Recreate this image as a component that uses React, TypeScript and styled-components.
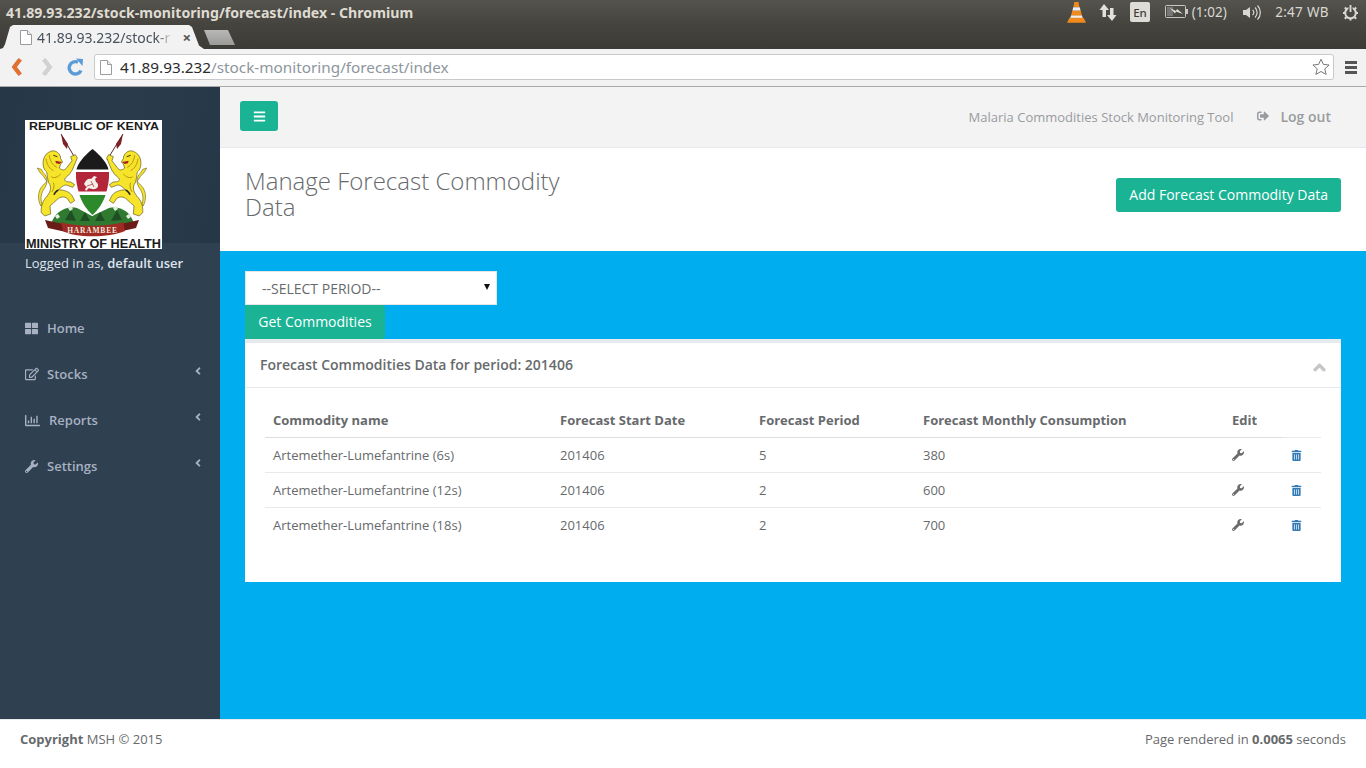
import { createGlobalStyle } from "styled-components";
import styled from "styled-components";
import {
  FaAngleLeft,
  FaBars,
  FaChevronUp,
  FaRegChartBar,
  FaRegEdit,
  FaSignOutAlt,
  FaThLarge,
  FaTrashAlt,
  FaWrench,
} from "react-icons/fa";

const GlobalStyle = createGlobalStyle`
  html, body {
    margin: 0;
    padding: 0;
    height: 100%;
    overflow: hidden;
  }
  body {
    font-family: "Open Sans", "Liberation Sans", sans-serif;
    font-size: 13px;
    color: #676a6c;
  }
  * {
    box-sizing: border-box;
  }
`;

const Screen = styled.div`
  width: 1366px;
  height: 768px;
  display: flex;
  flex-direction: column;
  overflow: hidden;
`;

/* ---- desktop + browser chrome ---- */

const TitleBar = styled.div`
  height: 24px;
  flex-shrink: 0;
  display: flex;
  align-items: center;
  justify-content: space-between;
  padding: 0 0 0 6px;
  background: linear-gradient(#55534d, #45443f);
`;

const WindowTitle = styled.div`
  font-family: "Noto Sans", "Open Sans", sans-serif;
  font-size: 14.15px;
  font-weight: 700;
  color: #dfdbd2;
  white-space: nowrap;
`;

const Tray = styled.div`
  display: flex;
  align-items: center;
  height: 24px;
  color: #d8d8d2;
  font-family: "Noto Sans", "Open Sans", sans-serif;
  font-size: 13.5px;
`;

const TrayItem = styled.div<{ $width: number; $inset?: number }>`
  width: ${(p) => p.$width}px;
  padding-left: ${(p) => p.$inset ?? 0}px;
  display: flex;
  align-items: center;
  justify-content: center;
  white-space: nowrap;
`;

const Clock = styled.span`
  letter-spacing: 0.3px;
`;

const LangBadge = styled.div`
  width: 20px;
  height: 20px;
  border-radius: 2px;
  background: #dedcd6;
  color: #3c3b37;
  font-size: 11.5px;
  font-weight: 500;
  display: flex;
  align-items: center;
  justify-content: center;
`;

const TabStrip = styled.div`
  height: 25px;
  flex-shrink: 0;
  display: flex;
  align-items: flex-end;
  background: linear-gradient(#45443f, #3c3b37);
`;

const ActiveTab = styled.div`
  width: 204px;
  height: 24px;
  flex-shrink: 0;
  display: flex;
  align-items: center;
  padding: 0 13px 0 20px;
  background: #f2f2f2;
  clip-path: polygon(0 100%, 3px 96%, 5px 80%, 10px 8%, 13px 0, 189px 0, 192px 8%, 199px 85%, 204px 100%);
`;

const TabTitle = styled.div`
  width: 136px;
  margin-left: 5px;
  overflow: hidden;
  white-space: nowrap;
  font-family: "Noto Sans", "Open Sans", sans-serif;
  font-size: 14px;
  color: #47505a;
  -webkit-mask-image: linear-gradient(90deg, #000 88%, transparent);
  mask-image: linear-gradient(90deg, #000 88%, transparent);
`;

const TabClose = styled.div`
  margin-left: auto;
  font-size: 15px;
  line-height: 1;
  font-weight: 700;
  color: #555;
`;

const NewTab = styled.div`
  width: 31px;
  height: 15px;
  margin: 0 0 4px 0;
  background: linear-gradient(#b8b8b6, #9a9a98);
  clip-path: polygon(0 0, 24px 0, 31px 100%, 6px 100%);
`;

const Toolbar = styled.div`
  height: 38px;
  flex-shrink: 0;
  display: flex;
  align-items: center;
  padding: 0 0 1px 0;
  background: #f2f2f2;
  border-bottom: 1px solid #a9a9a9;
`;

const NavIcons = styled.div`
  width: 94px;
  flex-shrink: 0;
  display: flex;
  align-items: center;
`;

const NavSlot = styled.div<{ $width: number }>`
  width: ${(p) => p.$width}px;
  display: flex;
  justify-content: center;
`;

const Omnibox = styled.div`
  width: 1240px;
  height: 26px;
  flex-shrink: 0;
  display: flex;
  align-items: center;
  padding: 0 3px 0 5px;
  background: #fff;
  border: 1px solid #c9c9c9;
  border-radius: 3px;
  font-family: "Noto Sans", "Open Sans", sans-serif;
  font-size: 15.3px;
`;

const UrlHost = styled.span`
  margin-left: 8px;
  color: #2b2b2b;
`;

const UrlPath = styled.span`
  color: #8d969d;
`;

const StarSlot = styled.div`
  margin-left: auto;
  display: flex;
`;

const MenuSlot = styled.div`
  flex: 1;
  display: flex;
  justify-content: center;
  padding-left: 1px;
`;

/* ---- the web page ---- */

const PageBody = styled.div`
  height: 632px;
  flex-shrink: 0;
  display: flex;
`;

const Sidebar = styled.aside`
  width: 220px;
  flex-shrink: 0;
  background: #2f4050;
`;

const Profile = styled.div`
  height: 156px;
  padding: 33px 0 0 25px;
  background: linear-gradient(100deg, #263747 0%, #2a3c4c 55%, #263747 100%);
`;

const LoggedIn = styled.div`
  margin: 12px 0 30px 25px;
  height: 20px;
  line-height: 16px;
  color: #dfe4ed;
  white-space: nowrap;

  strong {
    font-weight: 600;
  }
`;

const NavItem = styled.div`
  height: 46px;
  display: flex;
  align-items: center;
  padding: 0 16px 0 25px;
  color: #a7b1c2;
  font-weight: 600;
  font-size: 13px;

  svg {
    flex-shrink: 0;
  }
`;

const NavLabel = styled.span<{ $gap: number }>`
  margin-left: ${(p) => p.$gap}px;
`;

const NavArrow = styled.span`
  margin-left: auto;
  display: flex;
  margin-top: -6px;
`;

const Main = styled.main`
  flex: 1;
  min-width: 0;
  display: flex;
  flex-direction: column;
`;

const TopNav = styled.div`
  height: 61px;
  flex-shrink: 0;
  display: flex;
  align-items: center;
  padding: 0 35px 0 20px;
  background: #f3f3f4;
  border-bottom: 1px solid #e7eaec;
`;

const MenuButton = styled.button`
  width: 38px;
  height: 30px;
  margin-top: -2px;
  display: flex;
  align-items: center;
  justify-content: center;
  padding: 0;
  border: none;
  border-radius: 3px;
  background: #1ab394;
  color: #fff;
`;

const TopNavText = styled.span`
  margin-left: auto;
  color: #999c9e;
  white-space: nowrap;
`;

const LogOut = styled.a`
  margin: 0 0 2px 24px;
  display: flex;
  align-items: center;
  gap: 11px;
  color: #999c9e;
  font-size: 14px;
  font-weight: 600;
`;

const PageHeader = styled.div`
  height: 103px;
  flex-shrink: 0;
  display: flex;
  justify-content: space-between;
  padding: 20px 25px 0 25px;
  background: #fff;
`;

const PageTitle = styled.h2`
  width: 340px;
  margin: 0;
  font-size: 24px;
  font-weight: 300;
  line-height: 26px;
  color: #676a6c;
`;

const PrimaryButton = styled.button<{ $square?: boolean }>`
  height: 34px;
  padding: 0 13px 2px 13px;
  border: none;
  border-radius: ${(p) => (p.$square ? "0 3px 3px 0" : "3px")};
  background: #1ab394;
  color: #fff;
  font-family: inherit;
  font-size: 14px;
  white-space: nowrap;
`;

const AddButton = styled(PrimaryButton)`
  margin-top: 10px;
`;

const Content = styled.div`
  flex: 1;
  padding: 20px 25px 0 25px;
  background: #00adef;
`;

const PeriodSelect = styled.div`
  width: 252px;
  height: 34px;
  display: flex;
  align-items: center;
  justify-content: space-between;
  padding: 0 6px 0 16px;
  background: #fff;
  border: 1px solid #e5e6e7;
  font-size: 14px;
  color: #676a6c;
`;

const SelectArrow = styled.span`
  width: 0;
  height: 0;
  margin-top: -3px;
  border-left: 3.5px solid transparent;
  border-right: 3.5px solid transparent;
  border-top: 6px solid #111;
`;

const GetButton = styled(PrimaryButton)`
  display: block;
  width: 140px;
`;

const Panel = styled.section`
  height: 243px;
  background: #fff;
  border-top: 4px solid #e7eaec;
`;

const PanelTitle = styled.div`
  height: 45px;
  display: flex;
  align-items: center;
  justify-content: space-between;
  padding: 0 15px 2px 15px;
  border-bottom: 1px solid #e7eaec;
  font-size: 14px;
  font-weight: 600;
  color: #676a6c;
`;

const Collapse = styled.span`
  display: flex;
  color: #c4c6c8;
  margin-top: 6px;
`;

const PanelBody = styled.div`
  padding: 15px 20px 0 20px;
`;

const Table = styled.table`
  width: 1056px;
  table-layout: fixed;
  border-collapse: collapse;
  font-size: 13px;
  color: #676a6c;
`;

const HeadCell = styled.th<{ $blank?: boolean; $width: number }>`
  width: ${(p) => p.$width}px;
  height: 34px;
  padding: 0 8px;
  text-align: left;
  font-weight: 700;
  color: #676a6c;
  border-bottom: 1px solid ${(p) => (p.$blank ? "#e7eaec" : "#dddddd")};
`;

const Cell = styled.td`
  height: 35px;
  padding: 0 8px;
  border-bottom: 1px solid #e7eaec;
  white-space: nowrap;

  svg {
    display: block;
    margin-top: 1px;
  }
`;

const TrashCell = styled(Cell)`
  padding-left: 9px;
`;

const LastRow = styled.tr`
  td {
    border-bottom: none;
  }
`;

const Footer = styled.footer`
  height: 49px;
  flex-shrink: 0;
  display: flex;
  align-items: flex-start;
  justify-content: space-between;
  padding: 10px 20px 0 20px;
  background: #fff;
  border-top: 1px solid #e7eaec;
  color: #676a6c;
`;

const DocIcon = () => (
  <svg width="12" height="15" viewBox="0 0 12 15">
    <path d="M.5.5h7l4 4v10H.5z" fill="#fff" stroke="#9b9b9b" />
    <path d="M7.5.5v4h4" fill="#eee" stroke="#9b9b9b" />
  </svg>
);

const BackIcon = () => (
  <svg width="11" height="18" viewBox="0 0 11 18">
    <path d="M7.500.5 1 9l6.500 8.500 3-2L5.500 9l5-6.500z" fill="#e4702f" stroke="#cf5a20" strokeWidth=".6" />
  </svg>
);

const ForwardIcon = () => (
  <svg width="11" height="18" viewBox="0 0 11 18">
    <path d="M3.500.5 10 9l-6.500 8.500-3-2 5-6.500-5-6.500z" fill="#d2d2d2" stroke="#c6c6c6" strokeWidth=".6" />
  </svg>
);

const ReloadIcon = () => (
  <svg width="17" height="18" viewBox="0 0 17 18">
    <path d="M14 12.5A6.2 6.2 0 1 1 11 4.2" fill="none" stroke="#5b9bd8" strokeWidth="3.4" />
    <path d="M9 0.5 16 1l-.5 7z" fill="#5b9bd8" />
  </svg>
);

const StarIcon = () => (
  <svg width="18" height="18" viewBox="0 0 18 18">
    <path
      d="M9 1.2l2.4 5.2 5.7.6-4.3 3.8 1.3 5.6L9 13.5l-5.1 2.9 1.3-5.6L.9 7l5.7-.6z"
      fill="#fff"
      stroke="#777"
    />
  </svg>
);

const HamburgerIcon = () => (
  <svg width="14" height="13" viewBox="0 0 14 13">
    <path d="M1 0h12v3H1zM1 5h12v3H1zM1 10h12v3H1z" fill="#555" />
  </svg>
);

const ConeIcon = () => (
  <svg width="19" height="21" viewBox="0 0 19 21">
    <path d="M7.4 0h4l1 5H6.4z" fill="#f08a1c" />
    <path d="M6.2 5.2h6.6l.8 3.6H5.4z" fill="#eee" />
    <path d="M5.2 8.8h8.6l1.2 5H4z" fill="#f08a1c" />
    <path d="M4 13.6h11l.8 2.6H3.2z" fill="#eee" />
    <path d="M2.5 15.8h14l2.5 5H0z" fill="#f08a1c" />
  </svg>
);

const TransferIcon = () => (
  <svg width="18" height="17" viewBox="0 0 18 17">
    <path d="M5 0l5 6H7v7H3.500V6H.5z" fill="#e2e2dc" />
    <path d="M13 17l-5-6h3V4h3.500v7h3z" fill="#e2e2dc" />
  </svg>
);

const BatteryIcon = () => (
  <svg width="23" height="14" viewBox="0 0 23 14">
    <rect x=".5" y=".5" width="20" height="12" rx="1" fill="none" stroke="#c8c8c2" />
    <rect x="2" y="2" width="6" height="9" fill="#777" />
    <rect x="21" y="4" width="2" height="5" fill="#c8c8c2" />
    <path d="M5 3l6 3 1-2 6 5-7-2.500-1 2z" fill="#e2e2dc" />
  </svg>
);

const VolumeIcon = () => (
  <svg width="21" height="17" viewBox="0 0 21 17">
    <path d="M1 6h3l4-3v11l-4-3H1z" fill="#d8d8d2" />
    <path d="M10.500 6a3 3 0 0 1 0 5M13 3.500a7 7 0 0 1 0 10M15.500 1.500a10 10 0 0 1 0 14" fill="none" stroke="#d8d8d2" strokeWidth="1.200" />
  </svg>
);

// power symbol inside a cog, as the Ubuntu session indicator has it
const PowerIcon = () => (
  <svg width="17" height="17" viewBox="0 0 17 17">
    <circle cx="8.500" cy="9" r="5.300" fill="none" stroke="#d8d8d2" strokeWidth="2" />
    <path d="M8.500 1v7" stroke="#3f3e39" strokeWidth="4" />
    <path d="M8.500 1v7" stroke="#d8d8d2" strokeWidth="2" />
    <path d="M1 9h2.500M13.500 9H16M2.800 3.500l2 2M14.200 3.500l-2 2M2.800 14.700l2-2M14.200 14.700l-2-2M8.500 14v2.500" stroke="#d8d8d2" strokeWidth="2" />
  </svg>
);

// coordinates are those of a 3x crop of the crest, hence the scale
const Lion = () => (
  <g transform="translate(5 20) scale(.3333)">
    <path
      d="M50 124C44 114 38 104 30 98L22 84 34 88 40 98C54 112 54 128 44 144 34 158 30 172 36 194L32 198C22 176 24 156 34 142 40 134 46 130 50 124Z"
      fill="#f5e32c"
      stroke="#4d4310"
      strokeWidth="1.500"
    />
    <path
      d="M62 34C78 28 92 42 92 56L98 66 92 72 88 84C94 90 102 92 108 86L126 62 122 50 136 44 142 54 132 78C126 96 114 108 106 114 100 122 108 126 122 126L134 134 128 142 112 136C100 132 92 146 84 150 100 148 122 156 128 170L134 182 122 190 112 176C104 168 90 170 82 178 76 186 66 190 60 198L62 222 44 228 34 218C32 200 38 182 50 170 62 156 66 140 56 128 52 116 52 104 50 96 40 88 36 70 42 54 46 44 52 38 62 34Z"
      fill="#f6e42a"
      stroke="#4d4310"
      strokeWidth="1.800"
    />
    <path d="M48 56C50 70 56 84 70 92M58 46C60 62 66 74 80 82M64 110C74 116 82 112 92 102M70 128C74 136 72 146 66 156" fill="none" stroke="#b8950f" strokeWidth="3" />
    <path d="M76 62 96 66 88 72 78 70z" fill="#a8231f" />
    <path d="M70 46 82 50" stroke="#3a2c08" strokeWidth="3" />
    <path d="M84 150C80 154 74 158 72 164" fill="none" stroke="#222" strokeWidth="5" />
  </g>
);

const Crest = () => (
  <svg width="137" height="129" viewBox="0 0 137 129" style={{ display: "block" }}>
    <rect width="137" height="129" fill="#fff" />
    <text x="4" y="9.800" fontFamily="Liberation Sans" fontWeight="700" fontSize="11" textLength="130" lengthAdjust="spacingAndGlyphs" fill="#1b1b1b">
      REPUBLIC OF KENYA
    </text>
    {/* spears */}
    <path d="M36 14 50 38" stroke="#5a2a24" strokeWidth="1" />
    <path d="M36 14 43 24 42 29 38 24z" fill="#7d2226" />
    <path d="M98 14 82 40" stroke="#5a2a24" strokeWidth="1" />
    <path d="M98 14 91 24 92 29 96 24z" fill="#7d2226" />
    {/* mound */}
    <path d="M26 104C30 92 40 86 52 88L67 96 84 88C96 86 106 92 109 104 90 108 44 108 26 104z" fill="#2f7a30" />
    {/* shield */}
    <path d="M67.500 29C58 36 51 44 50 52 49 70 58 88 67.500 96 77 88 86 70 85 52 84 44 77 36 67.500 29z" fill="#fff" />
    <path d="M67.500 29C59 36 53 43 51.500 49.500H83.500C82 43 76 36 67.500 29z" fill="#1b1b1b" />
    <path d="M51 52H84C84.500 59 83 66 81.500 71.500H53.500C52 66 50.500 59 51 52z" fill="#b3263a" />
    <path d="M54.500 75H80.500C78 83 73 90 67.500 95 62 90 57 83 54.500 75z" fill="#2c8a2a" />
    <path d="M59 64c2-5 5-6 7-5l3-3 3 1-2 2 1 3c2 1 3 4 1 6-3 2-6 1-8 0l-3 3-1-2 2-2c-2-1-2-2-3-3z" fill="#f3efe8" />
    <path d="M66 61l3 6M62 66l6-2" stroke="#b3263a" strokeWidth=".7" />
    {/* foliage in front of the shield foot */}
    <path d="M40 100l6-10 5 11zM86 101l6-11 5 10zM55 101l5-9 5 9zM70 101l5-9 5 9z" fill="#1f4e24" />
    <path d="M43 88l3-2 2 3-3 2zM88 88l3-2 2 3-3 2zM30 96l3-2 2 3-3 2zM101 96l3-2 2 3-3 2z" fill="#e8efe0" />
    {/* lions */}
    <Lion />
    <g transform="translate(134 0) scale(-1 1)">
      <Lion />
    </g>
    {/* ribbon */}
    <path d="M20 100 38 104 41 112 23 108zM114 100 96 104 93 112 111 108z" fill="#6c1c16" />
    <path d="M36 102C50 107 84 107 98 102L100 111C84 118 50 118 38 111z" fill="#a02a24" />
    <text x="67.500" y="112.500" textAnchor="middle" fontFamily="Liberation Serif" fontWeight="700" fontSize="7.500" letterSpacing=".8" fill="#f2e9dc">
      HARAMBEE
    </text>
    <text x="1" y="127.500" fontFamily="Liberation Sans" fontWeight="700" fontSize="12" textLength="135" lengthAdjust="spacingAndGlyphs" fill="#1b1b1b">
      MINISTRY OF HEALTH
    </text>
  </svg>
);

const rows = [
  { name: "Artemether-Lumefantrine (6s)", start: "201406", period: "5", monthly: "380" },
  { name: "Artemether-Lumefantrine (12s)", start: "201406", period: "2", monthly: "600" },
  { name: "Artemether-Lumefantrine (18s)", start: "201406", period: "2", monthly: "700" },
];

export default function App() {
  return (
    <Screen>
      <GlobalStyle />
      <TitleBar>
        <WindowTitle>41.89.93.232/stock-monitoring/forecast/index - Chromium</WindowTitle>
        <Tray>
          <TrayItem $width={20}>
            <ConeIcon />
          </TrayItem>
          <TrayItem $width={44}>
            <TransferIcon />
          </TrayItem>
          <TrayItem $width={20}>
            <LangBadge>En</LangBadge>
          </TrayItem>
          <TrayItem $width={85} $inset={7}>
            <BatteryIcon />
            &nbsp;(1:02)
          </TrayItem>
          <TrayItem $width={34}>
            <VolumeIcon />
          </TrayItem>
          <TrayItem $width={66}>
            <Clock>2:47 WB</Clock>
          </TrayItem>
          <TrayItem $width={31}>
            <PowerIcon />
          </TrayItem>
        </Tray>
      </TitleBar>
      <TabStrip>
        <ActiveTab>
          <DocIcon />
          <TabTitle>41.89.93.232/stock-r</TabTitle>
          <TabClose>×</TabClose>
        </ActiveTab>
        <NewTab />
      </TabStrip>
      <Toolbar>
        <NavIcons>
          <NavSlot $width={32}>
            <BackIcon />
          </NavSlot>
          <NavSlot $width={30}>
            <ForwardIcon />
          </NavSlot>
          <NavSlot $width={26}>
            <ReloadIcon />
          </NavSlot>
        </NavIcons>
        <Omnibox>
          <DocIcon />
          <UrlHost>41.89.93.232</UrlHost>
          <UrlPath>/stock-monitoring/forecast/index</UrlPath>
          <StarSlot>
            <StarIcon />
          </StarSlot>
        </Omnibox>
        <MenuSlot>
          <HamburgerIcon />
        </MenuSlot>
      </Toolbar>

      <PageBody>
        <Sidebar>
          <Profile>
            <Crest />
          </Profile>
          <LoggedIn>
            Logged in as, <strong>default user</strong>
          </LoggedIn>
          <NavItem>
            <FaThLarge size={13} />
            <NavLabel $gap={9}>Home</NavLabel>
          </NavItem>
          <NavItem>
            <FaRegEdit size={14} />
            <NavLabel $gap={8}>Stocks</NavLabel>
            <NavArrow>
              <FaAngleLeft size={12} />
            </NavArrow>
          </NavItem>
          <NavItem>
            <FaRegChartBar size={15} />
            <NavLabel $gap={9}>Reports</NavLabel>
            <NavArrow>
              <FaAngleLeft size={12} />
            </NavArrow>
          </NavItem>
          <NavItem>
            <FaWrench size={13} />
            <NavLabel $gap={9}>Settings</NavLabel>
            <NavArrow>
              <FaAngleLeft size={12} />
            </NavArrow>
          </NavItem>
        </Sidebar>

        <Main>
          <TopNav>
            <MenuButton>
              <FaBars size={13} />
            </MenuButton>
            <TopNavText>Malaria Commodities Stock Monitoring Tool</TopNavText>
            <LogOut>
              <FaSignOutAlt size={12} />
              Log out
            </LogOut>
          </TopNav>
          <PageHeader>
            <PageTitle>Manage Forecast Commodity Data</PageTitle>
            <AddButton>Add Forecast Commodity Data</AddButton>
          </PageHeader>
          <Content>
            <PeriodSelect>
              --SELECT PERIOD--
              <SelectArrow />
            </PeriodSelect>
            <GetButton $square>Get Commodities</GetButton>
            <Panel>
              <PanelTitle>
                Forecast Commodities Data for period: 201406
                <Collapse>
                  <FaChevronUp size={13} stroke="currentColor" strokeWidth={50} />
                </Collapse>
              </PanelTitle>
              <PanelBody>
                <Table>
                  <thead>
                    <tr>
                      <HeadCell $width={287}>Commodity name</HeadCell>
                      <HeadCell $width={199}>Forecast Start Date</HeadCell>
                      <HeadCell $width={164}>Forecast Period</HeadCell>
                      <HeadCell $width={309}>Forecast Monthly Consumption</HeadCell>
                      <HeadCell $width={58}>Edit</HeadCell>
                      <HeadCell $width={39} $blank />
                    </tr>
                  </thead>
                  <tbody>
                    {rows.map((row, i) => {
                      const Row = i === rows.length - 1 ? LastRow : "tr";
                      return (
                        <Row key={row.name}>
                          <Cell>{row.name}</Cell>
                          <Cell>{row.start}</Cell>
                          <Cell>{row.period}</Cell>
                          <Cell>{row.monthly}</Cell>
                          <Cell>
                            <FaWrench size={12} color="#6b6b6b" />
                          </Cell>
                          <TrashCell>
                            <FaTrashAlt size={11} color="#337ab7" />
                          </TrashCell>
                        </Row>
                      );
                    })}
                  </tbody>
                </Table>
              </PanelBody>
            </Panel>
          </Content>
        </Main>
      </PageBody>

      <Footer>
        <span>
          <strong>Copyright</strong> MSH © 2015
        </span>
        <span>
          Page rendered in <strong>0.0065</strong> seconds
        </span>
      </Footer>
    </Screen>
  );
}
